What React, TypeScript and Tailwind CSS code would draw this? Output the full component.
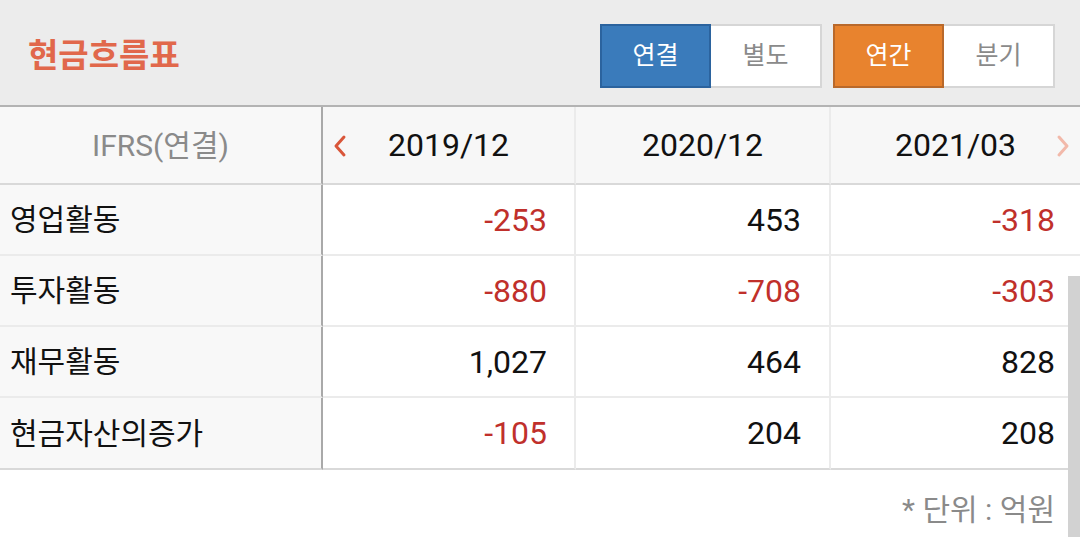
import React from 'react'

const font = { fontFamily: 'Roboto, "Noto Sans CJK KR", sans-serif' }

type Row = { label: string; values: number[] }

const rows: Row[] = [
  { label: '영업활동', values: [-253, 453, -318] },
  { label: '투자활동', values: [-880, -708, -303] },
  { label: '재무활동', values: [1027, 464, 828] },
  { label: '현금자산의증가', values: [-105, 204, 208] },
]

const periods = ['2019/12', '2020/12', '2021/03']

function Chevron({ dir, color }: { dir: 'left' | 'right'; color: string }) {
  return (
    <svg width="14" height="24" viewBox="0 0 14 24" fill="none">
      <polyline
        points={dir === 'left' ? '11,3 3,12 11,21' : '3,3 11,12 3,21'}
        stroke={color}
        strokeWidth="3"
        strokeLinecap="round"
        strokeLinejoin="round"
      />
    </svg>
  )
}

function Toggle({ on, off, active }: { on: string; off: string; active: string }) {
  return (
    <div className="flex h-[64px]">
      <div
        className={`w-[111px] flex items-center justify-center text-white text-[25px] border-2 ${active}`}
      >
        {on}
      </div>
      <div className="w-[111px] flex items-center justify-center bg-white text-[#8a8a8a] text-[25px] border-2 border-l-0 border-[#d6d6d6]">
        {off}
      </div>
    </div>
  )
}

export default function App() {
  return (
    <div className="relative w-[1080px] h-[537px] bg-white overflow-hidden" style={font}>
      <div className="h-[107px] bg-[#ececec] border-b-2 border-[#b3b3b3] flex items-center justify-between pl-[28px] pr-[25px]">
        <h1 className="text-[33px] font-bold text-[#e1684b] mt-[6px]">현금흐름표</h1>
        <div className="flex gap-[11px] mt-[6px]">
          <Toggle on="연결" off="별도" active="bg-[#3a7bbb] border-[#2b639e]" />
          <Toggle on="연간" off="분기" active="bg-[#e8832e] border-[#b9692b]" />
        </div>
      </div>

      <div className="grid grid-cols-[323px_253px_255px_1fr]">
        <div className="h-[78px] bg-[#f8f8f8] border-r-2 border-[#a9a9a9] border-b-2 border-b-[#d9d9d9] flex items-center justify-center text-[30px] text-[#8a8a8a]">
          IFRS(연결)
        </div>
        {periods.map((p, i) => (
          <div
            key={p}
            className={`relative h-[78px] bg-[#f7f7f7] border-b-2 border-[#d9d9d9] flex items-center justify-center text-[32px] text-[#111] ${
              i < 2 ? 'border-r-2 border-r-[#ebebeb]' : ''
            }`}
          >
            {i === 0 && (
              <span className="absolute left-[10px] top-[27px]">
                <Chevron dir="left" color="#d9563a" />
              </span>
            )}
            {p}
            {i === 2 && (
              <span className="absolute right-[10px] top-[27px]">
                <Chevron dir="right" color="#f2b9aa" />
              </span>
            )}
          </div>
        ))}

        {rows.map((r, ri) => (
          <React.Fragment key={r.label}>
            <div
              className={`h-[71px] bg-[#f8f8f8] border-r-2 border-[#a9a9a9] border-b-2 flex items-center pl-[10px] text-[30px] text-[#111] ${
                ri === rows.length - 1 ? 'border-b-[#d9d9d9] h-[72px]' : 'border-b-[#ebebeb]'
              }`}
            >
              {r.label}
            </div>
            {r.values.map((v, i) => (
              <div
                key={i}
                className={`h-[71px] bg-white border-b-2 flex items-center justify-end text-[32px] ${
                  ri === rows.length - 1 ? 'border-b-[#d9d9d9] h-[72px]' : 'border-b-[#ebebeb]'
                } ${i < 2 ? 'border-r-2 border-r-[#ebebeb]' : ''} ${
                  i === 0 ? 'pr-[27px]' : i === 1 ? 'pr-[28px]' : 'pr-[25px]'
                } ${v < 0 ? 'text-[#c0302b]' : 'text-[#111]'}`}
              >
                {v.toLocaleString('en-US')}
              </div>
            ))}
          </React.Fragment>
        ))}
      </div>

      <div className="flex justify-end pr-[25px] pt-[17px] text-[30px] text-[#8a8a8a]">* 단위 : 억원</div>

      <div className="absolute right-0 top-[276px] w-[12px] h-[261px] bg-[#d2d2d2]" />
    </div>
  )
}
